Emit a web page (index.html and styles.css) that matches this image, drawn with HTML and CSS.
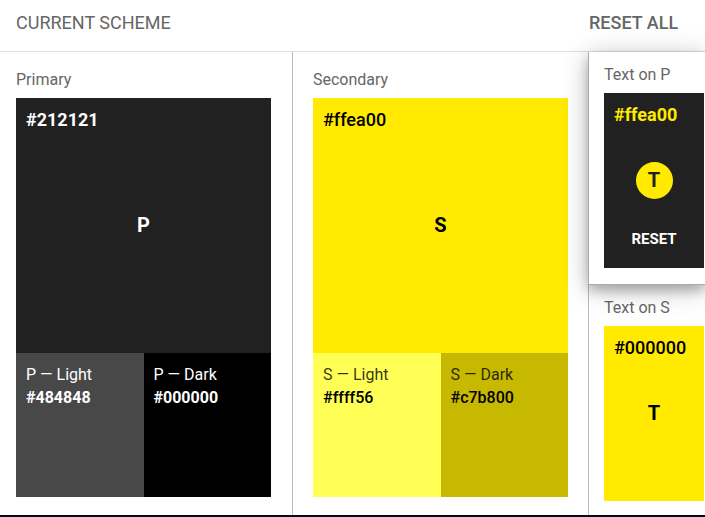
FILE: index.html
```
<!DOCTYPE html>
<html lang="en">
<head>
<meta charset="utf-8">
<title>Current scheme</title>
<link rel="stylesheet" href="styles.css">
</head>
<body>
<div class="panel">
  <header class="header">
    <h1 class="title">CURRENT SCHEME</h1>
    <button class="reset-all" type="button">RESET ALL</button>
  </header>
  <main class="scheme">
    <section class="column primary">
      <h2 class="label">Primary</h2>
      <button class="swatch main" type="button">
        <span class="hex">#212121</span>
        <span class="letter">P</span>
      </button>
      <div class="variants">
        <div class="variant light"><span>P — Light</span><strong>#484848</strong></div>
        <div class="variant dark"><span>P — Dark</span><strong>#000000</strong></div>
      </div>
    </section>
    <section class="column secondary">
      <h2 class="label">Secondary</h2>
      <button class="swatch main" type="button">
        <span class="hex">#ffea00</span>
        <span class="letter">S</span>
      </button>
      <div class="variants">
        <div class="variant light"><span>S — Light</span><strong>#ffff56</strong></div>
        <div class="variant dark"><span>S — Dark</span><strong>#c7b800</strong></div>
      </div>
    </section>
    <div class="texts">
      <section class="text-card selected">
        <h2 class="label">Text on P</h2>
        <div class="swatch small on-primary">
          <span class="hex">#ffea00</span>
          <span class="letter badge">T</span>
          <button class="reset" type="button">RESET</button>
        </div>
      </section>
      <section class="text-card">
        <h2 class="label">Text on S</h2>
        <button class="swatch small on-secondary" type="button">
          <span class="hex">#000000</span>
          <span class="letter">T</span>
        </button>
      </section>
    </div>
  </main>
</div>
</body>
</html>
```
FILE: styles.css
```
* {
  box-sizing: border-box;
}

body {
  margin: 0;
  overflow: hidden;
  background: #fff;
  color: #666;
  font-family: Roboto, "Liberation Sans", sans-serif;
  font-size: 16px;
  line-height: 23px;
}

button {
  border: 0;
  padding: 0;
  background: none;
  color: inherit;
  font: inherit;
  text-align: left;
  cursor: pointer;
}

.panel {
  display: flex;
  flex-direction: column;
  min-height: 100vh;
  border-bottom: 2px solid #040d18;
}

.header,
.scheme {
  display: grid;
  grid-template-columns: 293fr 296fr 116fr;
}

.header {
  padding: 11px 0 17px;
  border-bottom: 1px solid #dedede;
}

.title {
  grid-column: 1 / 3;
  margin: 0;
  padding-left: 16px;
  font-size: 18px;
  font-weight: 400;
  line-height: 23px;
}

.reset-all {
  justify-self: start;
  font-size: 18px;
  font-weight: 500;
  line-height: 23px;
}

.scheme {
  flex: 1;
}

.column {
  min-width: 0;
  padding: 16px 20px 18px;
  border-right: 1px solid #bbb;
}

.primary {
  padding-right: 21px;
  padding-left: 16px;
}

.label {
  margin: 0 0 7px;
  font-size: 16px;
  font-weight: 400;
  line-height: 23px;
  white-space: nowrap;
}

.swatch {
  display: grid;
  grid-template-rows: 1fr auto 1fr;
  width: 100%;
  padding: 10px;
}

.main {
  aspect-ratio: 1;
}

.hex {
  font-size: 18px;
  font-weight: 500;
  line-height: 23px;
}

.letter {
  justify-self: center;
  font-size: 20px;
  font-weight: 700;
}

.variants {
  display: grid;
  grid-template-columns: 1fr 1fr;
}

.variant {
  display: flex;
  flex-direction: column;
  min-height: 144px;
  padding: 10px;
  white-space: nowrap;
}

.variant strong {
  color: #000;
  font-weight: 500;
}

.primary .main,
.on-primary {
  background: #212121;
}

.primary .swatch,
.primary .variant,
.primary .variant strong {
  color: #fff;
}

.primary .hex,
.primary .variant strong,
.on-primary .hex {
  font-weight: 700;
}

.primary .light {
  background: #484848;
}

.primary .dark {
  background: #000;
}

.secondary .main,
.on-secondary {
  background: #ffea00;
  color: #000;
}

.secondary .variant {
  color: rgba(0, 0, 0, 0.8);
}

.secondary .light {
  background: #ffff56;
}

.secondary .dark {
  background: #c7b800;
}

.texts {
  min-width: 0;
  margin-left: -1px;
}

.text-card {
  padding: 11px 1px 14px 16px;
}

.selected {
  position: relative;
  border: solid #aaa;
  border-width: 0 0 1px 1px;
  padding-bottom: 16px;
  padding-left: 15px;
  background: #fff;
  box-shadow: 0 6px 10px rgba(0, 0, 0, 0.2), 0 4px 24px rgba(0, 0, 0, 0.26);
}

.small {
  height: 175px;
}

.on-primary {
  color: #ffea00;
}

.badge {
  width: 37px;
  height: 37px;
  border-radius: 50%;
  background: #ffea00;
  color: #212121;
  line-height: 37px;
  text-align: center;
}

.reset {
  align-self: end;
  justify-self: center;
  margin-bottom: 7px;
  color: #fff;
  font-size: 15px;
  font-weight: 700;
}
```
